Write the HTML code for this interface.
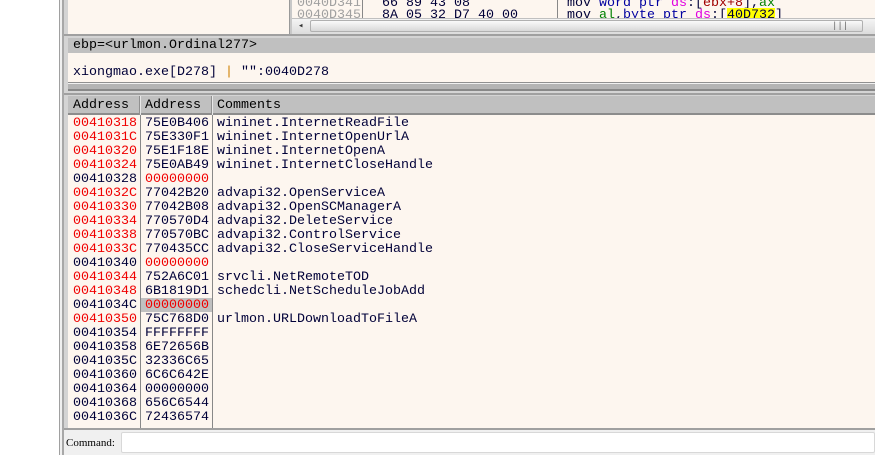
<!DOCTYPE html>
<html><head><meta charset="utf-8"><style>
*{margin:0;padding:0;box-sizing:border-box}
body{width:875px;height:455px;overflow:hidden;background:#fff;position:relative;font-family:"Liberation Mono",monospace;font-size:13.33px;color:#000038}
.a{position:absolute}
.t{position:absolute;white-space:pre;line-height:14px}
.r{color:#f00000}
.g{color:#a0a0a0}
</style></head><body>
<div class="a" style="left:59px;top:0;width:816px;height:455px;background:#f0f0f0;border-left:1px solid #a0a0a0"></div>
<div class="a" style="left:62px;top:0;width:2px;height:455px;background:#a8a8a8"></div>
<div class="a" style="left:64px;top:0;width:811px;height:430px;background:#d4d4d4"></div>
<div class="a" style="left:68px;top:0;width:221px;height:34px;background:#fdf6ef"></div>
<div class="a" style="left:289px;top:0;width:3px;height:34px;background:#c8c8c8;border-left:1px solid #999"></div>
<div class="a" style="left:292px;top:0;width:583px;height:34px;background:#fdf6ef;overflow:hidden">
 <div class="a" style="left:70px;top:0;width:1px;height:18px;background:#888"></div>
 <div class="a" style="left:265px;top:0;width:1px;height:18px;background:#888"></div>
 <div class="t g" style="left:5px;top:-3px">0040D341</div>
 <div class="t g" style="left:5px;top:9px">0040D345</div>
 <div class="t" style="left:90px;top:-3px">66 89 43 08</div>
 <div class="t" style="left:90px;top:9px">8A 05 32 D7 40 00</div>
 <div class="t" style="left:275px;top:-3px">mov <span style="color:#0000a0">word ptr</span> <span style="color:#e000e0">ds</span>:[<span style="color:#a00000">ebx+8</span>],<span style="color:#008000">ax</span></div>
 <div class="t" style="left:275px;top:9px">mov <span style="color:#008000">al</span>,<span style="color:#0000a0">byte ptr</span> <span style="color:#e000e0">ds</span>:[<span style="background:#ffff00">40D732</span>]</div>
 <div class="a" style="left:0;top:18px;width:583px;height:16px;background:linear-gradient(#f4f4f4,#dcdcdc);border-top:1px solid #c0c0c0"></div>
 <div class="a" style="left:18px;top:20px;width:553px;height:12px;background:linear-gradient(#fafafa,#d8d8d8);border:1px solid #b0b0b0;border-radius:2px"></div>
 <div class="t" style="left:6px;top:19px;font-size:9px;color:#333">◂</div>
 <div class="t" style="left:540px;top:19px;font-size:9px;color:#666">|||</div>
</div>
<div class="a" style="left:64px;top:34px;width:811px;height:2px;background:#a0a0a0"></div>
<div class="a" style="left:68px;top:38px;width:807px;height:15px;background:#c0c0c0"></div>
<div class="t" style="left:73px;top:39px;color:#000">ebp=&lt;urlmon.Ordinal277&gt;</div>
<div class="a" style="left:68px;top:53px;width:807px;height:29px;background:#fdf6ef"></div>
<div class="t" style="left:73px;top:66px">xiongmao.exe[D278] <span style="color:#d08000">|</span> "":0040D278</div>
<div class="a" style="left:68px;top:82px;width:807px;height:9px;background:linear-gradient(#909090 0 1px,#f0f0f0 1px 2px,#b4b4b4 2px 7px,#888 7px)"></div>
<div class="a" style="left:64px;top:93px;width:811px;height:2px;background:#a0a0a0"></div>
<div class="a" style="left:68px;top:96px;width:807px;height:332px;background:#fdf6ef"></div>
<div class="a" style="left:68px;top:96px;width:807px;height:19px;background:#c0c0c0;border-bottom:2px solid #8c8c8c"></div>
<div class="a" style="left:139px;top:96px;width:2px;height:19px;background:#e8e8e8;border-left:1px solid #909090"></div>
<div class="a" style="left:211px;top:96px;width:2px;height:19px;background:#e8e8e8;border-left:1px solid #909090"></div>
<div class="t" style="left:73px;top:99px;color:#000">Address</div>
<div class="t" style="left:145px;top:99px;color:#000">Address</div>
<div class="t" style="left:217px;top:99px;color:#000">Comments</div>
<div class="a" style="left:140px;top:115px;width:1px;height:313px;background:#888"></div>
<div class="a" style="left:212px;top:115px;width:1px;height:313px;background:#888"></div>
<div class="a" style="left:141px;top:298px;width:71px;height:14px;background:#c0c0c0"></div>
<div class="t" style="left:73px;top:117px"><span class="r">00410318</span>
<span class="r">0041031C</span>
<span class="r">00410320</span>
<span class="r">00410324</span>
00410328
<span class="r">0041032C</span>
<span class="r">00410330</span>
<span class="r">00410334</span>
<span class="r">00410338</span>
<span class="r">0041033C</span>
00410340
<span class="r">00410344</span>
<span class="r">00410348</span>
0041034C
<span class="r">00410350</span>
00410354
00410358
0041035C
00410360
00410364
00410368
0041036C</div>
<div class="t" style="left:145px;top:117px">75E0B406
75E330F1
75E1F18E
75E0AB49
<span class="r">00000000</span>
77042B20
77042B08
770570D4
770570BC
770435CC
<span class="r">00000000</span>
752A6C01
6B1819D1
<span class="r">00000000</span>
75C768D0
FFFFFFFF
6E72656B
32336C65
6C6C642E
00000000
656C6544
72436574</div>
<div class="t" style="left:217px;top:117px">wininet.InternetReadFile
wininet.InternetOpenUrlA
wininet.InternetOpenA
wininet.InternetCloseHandle

advapi32.OpenServiceA
advapi32.OpenSCManagerA
advapi32.DeleteService
advapi32.ControlService
advapi32.CloseServiceHandle

srvcli.NetRemoteTOD
schedcli.NetScheduleJobAdd

urlmon.URLDownloadToFileA</div>
<div class="a" style="left:64px;top:428px;width:811px;height:2px;background:#a0a0a0"></div>
<div class="a" style="left:64px;top:430px;width:811px;height:25px;background:#f0f0f0"></div>
<div class="t" style="left:66px;top:436px;font-family:'Liberation Serif',serif;font-size:11px;color:#000">Command:</div>
<div class="a" style="left:121px;top:432px;width:754px;height:21px;background:#fff;border:1px solid #d8d8d8;border-radius:2px"></div>
</body></html>
